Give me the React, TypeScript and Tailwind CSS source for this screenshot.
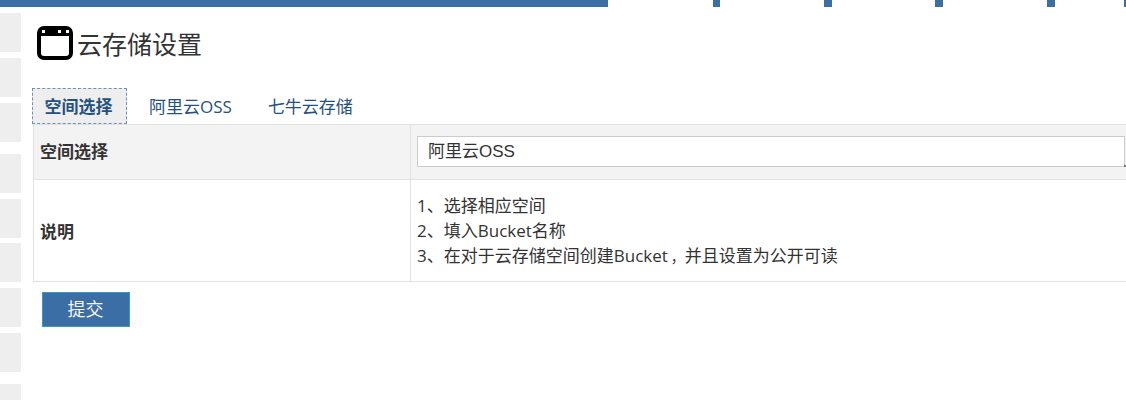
export default function App() {
  const sideBlocks = ["h-[39px]", "h-[39px] mt-[6px]", "h-[39px] mt-[6px]", "h-[39px] mt-[12px]", "h-[39px] mt-[6px]", "h-[39px] mt-[5px]", "h-[39px] mt-[6px]", "h-[39px] mt-[6px]", "h-[39px] mt-[12px]"];
  return (
    <div className="w-[1126px] h-[400px] overflow-hidden bg-white text-[#333] font-['Open_Sans','Noto_Sans_CJK_SC',sans-serif]">
      <div className="flex h-[7px]">
        <div className="w-[608px] bg-[#3b6ea5]" />
        <div className="w-[105px]" />
        <div className="w-[7px] bg-[#3b6ea5]" />
        <div className="w-[104px]" />
        <div className="w-[8px] bg-[#3b6ea5]" />
        <div className="w-[103px]" />
        <div className="w-[8px] bg-[#3b6ea5]" />
        <div className="w-[104px]" />
        <div className="w-[8px] bg-[#3b6ea5]" />
        <div className="w-[69px]" />
        <div className="w-[2px] bg-[#3b6ea5]" />
      </div>
      <div className="flex h-[393px]">
        <div className="w-[21px] shrink-0 pt-[6px]">
          {sideBlocks.map((c, i) => (
            <div key={i} className={`bg-[#eeeeee] ${c}`} />
          ))}
        </div>
        <div className="flex-1 min-w-0 pl-[11px]">
          <div className="flex items-center h-[34px] mt-[19px] ml-[5px]">
            <svg width="36" height="34" viewBox="0 0 36 34" className="shrink-0">
              <rect x="2" y="2" width="32" height="30" rx="5" fill="#fff" stroke="#000" strokeWidth="4" />
              <path d="M3 10V6a3 3 0 0 1 3-3h24a3 3 0 0 1 3 3v4z" fill="#000" />
              <rect x="5" y="4" width="3" height="3" fill="#fff" />
              <rect x="21" y="4" width="3" height="3" fill="#fff" />
              <rect x="29" y="4" width="3" height="3" fill="#fff" />
            </svg>
            <h1 className="ml-[4px] pt-[2px] text-[25px] leading-[34px] font-normal text-[#333]">云存储设置</h1>
          </div>
          <div className="flex mt-[28px] h-[36px] text-[17px] text-[#26517f]">
            <div className="w-[95px] h-[36px] pt-px bg-[#eeeeee] border border-dashed border-[#6f8fb5] flex items-center justify-center font-bold pr-[2px]">空间选择</div>
            <div className="ml-[22px] pt-[2px] flex items-center">阿里云OSS</div>
            <div className="ml-[36px] pt-[2px] flex items-center">七牛云存储</div>
          </div>
          <table className="ml-px w-[1100px] table-fixed border-collapse text-[17px] leading-[25px] border border-[#e2e2e2]">
            <colgroup>
              <col className="w-[377px]" />
              <col />
            </colgroup>
            <tbody>
              <tr className="h-[55px] bg-[#f3f3f3]">
                <th className="border border-[#e2e2e2] pl-[6px] pb-[2px] text-left font-bold">空间选择</th>
                <td className="border border-[#e2e2e2] pl-[6px] pb-[2px]">
                  <div className="relative w-[708px]">
                    <textarea
                      readOnly
                      value="阿里云OSS"
                      className="block w-full h-[31px] resize-none bg-white border border-[#cccccc] px-[10px] py-0 text-[17px] leading-[29px] text-[#333] outline-none font-['Liberation_Sans','Noto_Sans_CJK_SC',sans-serif]"
                    />
                    <div className="absolute right-[-1px] bottom-0 w-[2px] h-[2px] bg-[#777]" />
                  </div>
                </td>
              </tr>
              <tr className="h-[102px] bg-white">
                <th className="border border-[#e2e2e2] pl-[6px] pt-px text-left font-bold">说明</th>
                <td className="border border-[#e2e2e2] pl-[6px]">
                  <div>1、选择相应空间</div>
                  <div>2、填入Bucket名称</div>
                  <div>3、在对于云存储空间创建Bucket<span className="ml-[3px] text-[14px]">，</span>并且设置为公开可读</div>
                </td>
              </tr>
            </tbody>
          </table>
          <button className="block ml-[10px] mt-[10px] w-[88px] h-[35px] bg-[#3b6ea5] border border-[#3a97c9] text-[#f4f4f4] text-[18px] pr-[1px]">提交</button>
        </div>
      </div>
    </div>
  );
}
